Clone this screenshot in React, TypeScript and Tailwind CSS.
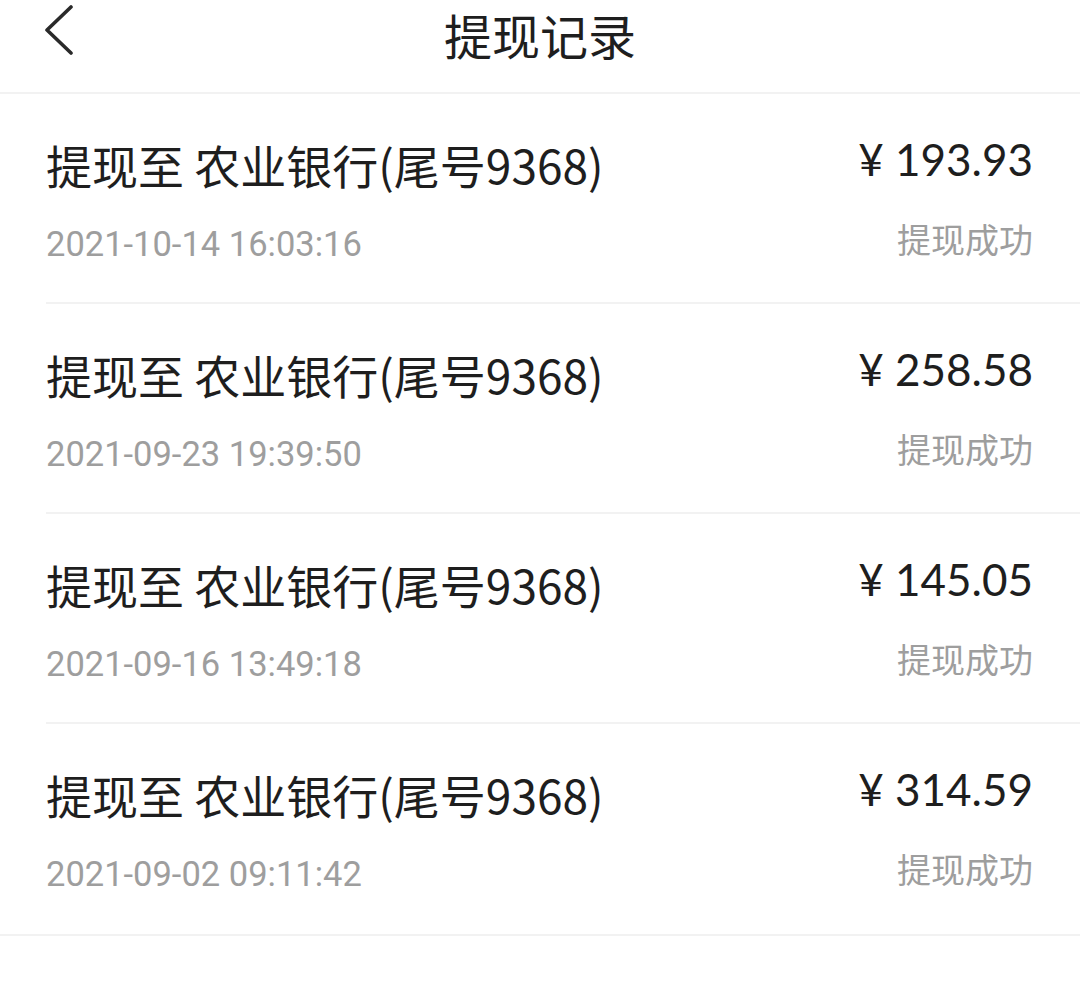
import React from "react";

const records = [
  { date: "2021-10-14 16:03:16", amount: "193.93" },
  { date: "2021-09-23 19:39:50", amount: "258.58" },
  { date: "2021-09-16 13:49:18", amount: "145.05" },
  { date: "2021-09-02 09:11:42", amount: "314.59" },
];

const cjk = { fontFamily: '"Noto Sans CJK SC", "Noto Sans", sans-serif' };

export default function App() {
  return (
    <div className="w-[1080px] h-[983px] bg-white" style={cjk}>
      <div className="grid grid-cols-[1fr_auto_1fr] items-start h-[94px] border-b-2 border-[#f2f2f2]">
        <div className="pl-[42px] pt-[3px] flex">
          <svg width="34" height="52" viewBox="0 0 34 52" fill="none">
            <polyline points="29,4 5,27 29,50" stroke="#2a2a2a" strokeWidth="3.6" strokeLinecap="round" strokeLinejoin="round" />
          </svg>
        </div>
        <div className="text-[48px] leading-[68px] text-[#1e1e1e]">提现记录</div>
        <div />
      </div>
      <div className="border-b-2 border-[#f2f2f2]">
        {records.map((r, i) => (
          <div key={i} className="pl-[46px]">
            <div
              className={
                "h-[210px] flex justify-between pr-[47px] " +
                (i < records.length - 1 ? "border-b-2 border-[#f2f2f2]" : "")
              }
            >
              <div className="flex flex-col pt-[47px]">
                <div className="text-[46px] leading-[46px] text-[#1e1e1e] whitespace-nowrap">
                  提现至 农业银行(尾号9368)
                </div>
                <div
                  className="mt-[40px] text-[34.5px] leading-[34px] text-[#9e9e9e] whitespace-nowrap"
                  style={{ fontFamily: 'Roboto, "Noto Sans", sans-serif' }}
                >
                  {r.date}
                </div>
              </div>
              <div className="flex flex-col items-end pt-[43px]">
                <div
                  className="text-[44px] leading-[44px] text-[#1e1e1e] whitespace-nowrap"
                  style={{ fontFamily: 'Lato, "Noto Sans", sans-serif' }}
                >
                  ¥ {r.amount}
                </div>
                <div className="mt-[41px] text-[34px] leading-[34px] text-[#9e9e9e]">提现成功</div>
              </div>
            </div>
          </div>
        ))}
      </div>
    </div>
  );
}
